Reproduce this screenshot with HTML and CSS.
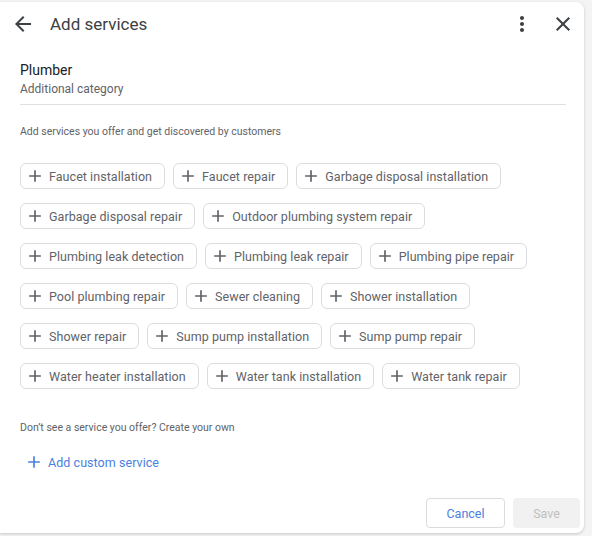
FILE: index.html
```html
<!DOCTYPE html>
<html>
<head>
<meta charset="utf-8">
<title>Add services</title>
<link rel="stylesheet" href="styles.css">
</head>
<body>
  <div class="dialog">
    <div class="header">
      <button class="icon-btn back" aria-label="Back">
        <svg width="24" height="24" viewBox="0 0 24 24"><path d="M20 11H7.83l5.59-5.590L12 4l-8 8 8 8 1.41-1.41L7.83 13H20v-2z" fill="#3c4043"/></svg>
      </button>
      <div class="title">Add services</div>
      <button class="icon-btn more" aria-label="More">
        <svg width="24" height="24" viewBox="0 0 24 24"><path d="M12 8c1.1 0 2-.9 2-2s-.9-2-2-2-2 .9-2 2 .9 2 2 2zm0 2c-1.1 0-2 .9-2 2s.9 2 2 2 2-.9 2-2-.9-2-2-2zm0 6c-1.1 0-2 .9-2 2s.9 2 2 2 2-.9 2-2-.9-2-2-2z" fill="#3c4043"/></svg>
      </button>
      <button class="icon-btn close" aria-label="Close">
        <svg width="24" height="24" viewBox="0 0 24 24"><path d="M19 6.41L17.59 5 12 10.59 6.41 5 5 6.41 10.59 12 5 17.59 6.41 19 12 13.41 17.59 19 19 17.59 13.41 12z" fill="#3c4043"/></svg>
      </button>
    </div>

    <div class="content">
      <div class="category">
        <div class="cat-name">Plumber</div>
        <div class="cat-type">Additional category</div>
      </div>

      <p class="hint">Add services you offer and get discovered by customers</p>

      <div class="chips" id="chips"></div>

      <p class="hint own">Don’t see a service you offer? Create your own</p>

      <button class="custom">
        <svg width="20" height="20" viewBox="0 0 24 24"><path d="M19 13h-6v6h-2v-6H5v-2h6V5h2v6h6v2z" fill="#4a80e0"/></svg>
        <span>Add custom service</span>
      </button>
    </div>

    <div class="footer">
      <button class="btn cancel">Cancel</button>
      <button class="btn save" disabled>Save</button>
    </div>
  </div>

<script>
var services = [
  'Faucet installation', 'Faucet repair', 'Garbage disposal installation',
  'Garbage disposal repair', 'Outdoor plumbing system repair',
  'Plumbing leak detection', 'Plumbing leak repair', 'Plumbing pipe repair',
  'Pool plumbing repair', 'Sewer cleaning', 'Shower installation',
  'Shower repair', 'Sump pump installation', 'Sump pump repair',
  'Water heater installation', 'Water tank installation', 'Water tank repair'
];
var plus = '<svg width="20" height="20" viewBox="0 0 24 24"><path d="M19 13h-6v6h-2v-6H5v-2h6V5h2v6h6v2z" fill="#5f6368"/></svg>';
for (var i = 0; i < services.length; i++) {
  var chip = document.createElement('button');
  chip.className = 'chip';
  chip.innerHTML = plus + '<span>' + services[i] + '</span>';
  chips.appendChild(chip);
}
</script>
</body>
</html>
```

FILE: styles.css
```css
* {
  font-family: Roboto, "Liberation Sans", Arial, sans-serif;
  box-sizing: border-box;
}
html, body {
  height: 100%;
}
body {
  margin: 0;
  background: #f4f4f4;
  overflow: hidden;
}
button {
  border: none;
  background: none;
  padding: 0;
  cursor: pointer;
}

.dialog {
  width: 584px;
  height: 531px;
  margin-top: 2px;
  background: #fff;
  border-radius: 0 8px 8px 0;
  box-shadow: 0 1px 3px rgba(60, 64, 67, 0.25);
  display: flex;
  flex-direction: column;
}

.header {
  flex-shrink: 0;
  height: 44px;
  display: flex;
  align-items: center;
  padding: 0 9px 0 11px;
}
.icon-btn {
  width: 24px;
  height: 24px;
  display: flex;
  align-items: center;
  justify-content: center;
}
.title {
  flex: 1;
  margin-left: 15px;
  font-size: 17px;
  color: #3c4043;
}
.more {
  margin-right: 17px;
}

.content {
  padding: 0 18px 0 20px;
}
.category {
  padding-top: 14px;
  padding-bottom: 6px;
  border-bottom: 1px solid #e0e0e0;
}
.cat-name {
  font-size: 14px;
  line-height: 20px;
  color: #202124;
}
.cat-type {
  font-size: 12px;
  line-height: 18px;
  color: #5f6368;
}

.hint {
  margin: 19px 0 0;
  font-size: 10.5px;
  line-height: 16px;
  color: #5f6368;
}

.chips {
  display: flex;
  flex-wrap: wrap;
  gap: 14px 8px;
  margin-top: 23px;
}
.chip {
  height: 26px;
  display: flex;
  align-items: center;
  gap: 4px;
  padding: 0 12px 0 4px;
  border: 1px solid #dadce0;
  border-radius: 6px;
  font-size: 12.5px;
  letter-spacing: 0.05px;
  color: #5f6368;
}

.hint.own {
  margin-top: 31px;
}

.custom {
  display: flex;
  align-items: center;
  gap: 4px;
  height: 32px;
  margin-top: 10px;
  padding-left: 4px;
  font-size: 12.5px;
  letter-spacing: 0.05px;
  color: #4a80e0;
}

.footer {
  margin-top: auto;
  display: flex;
  justify-content: flex-end;
  gap: 8px;
  padding: 0 4px 5px 0;
}
.btn {
  height: 30px;
  border-radius: 4px;
  font-size: 12.5px;
}
.cancel {
  width: 79px;
  border: 1px solid #dadce0;
  color: #4a80e0;
}
.save {
  width: 67px;
  background: #f1f1f1;
  color: #c0c0c0;
  cursor: default;
}
```
